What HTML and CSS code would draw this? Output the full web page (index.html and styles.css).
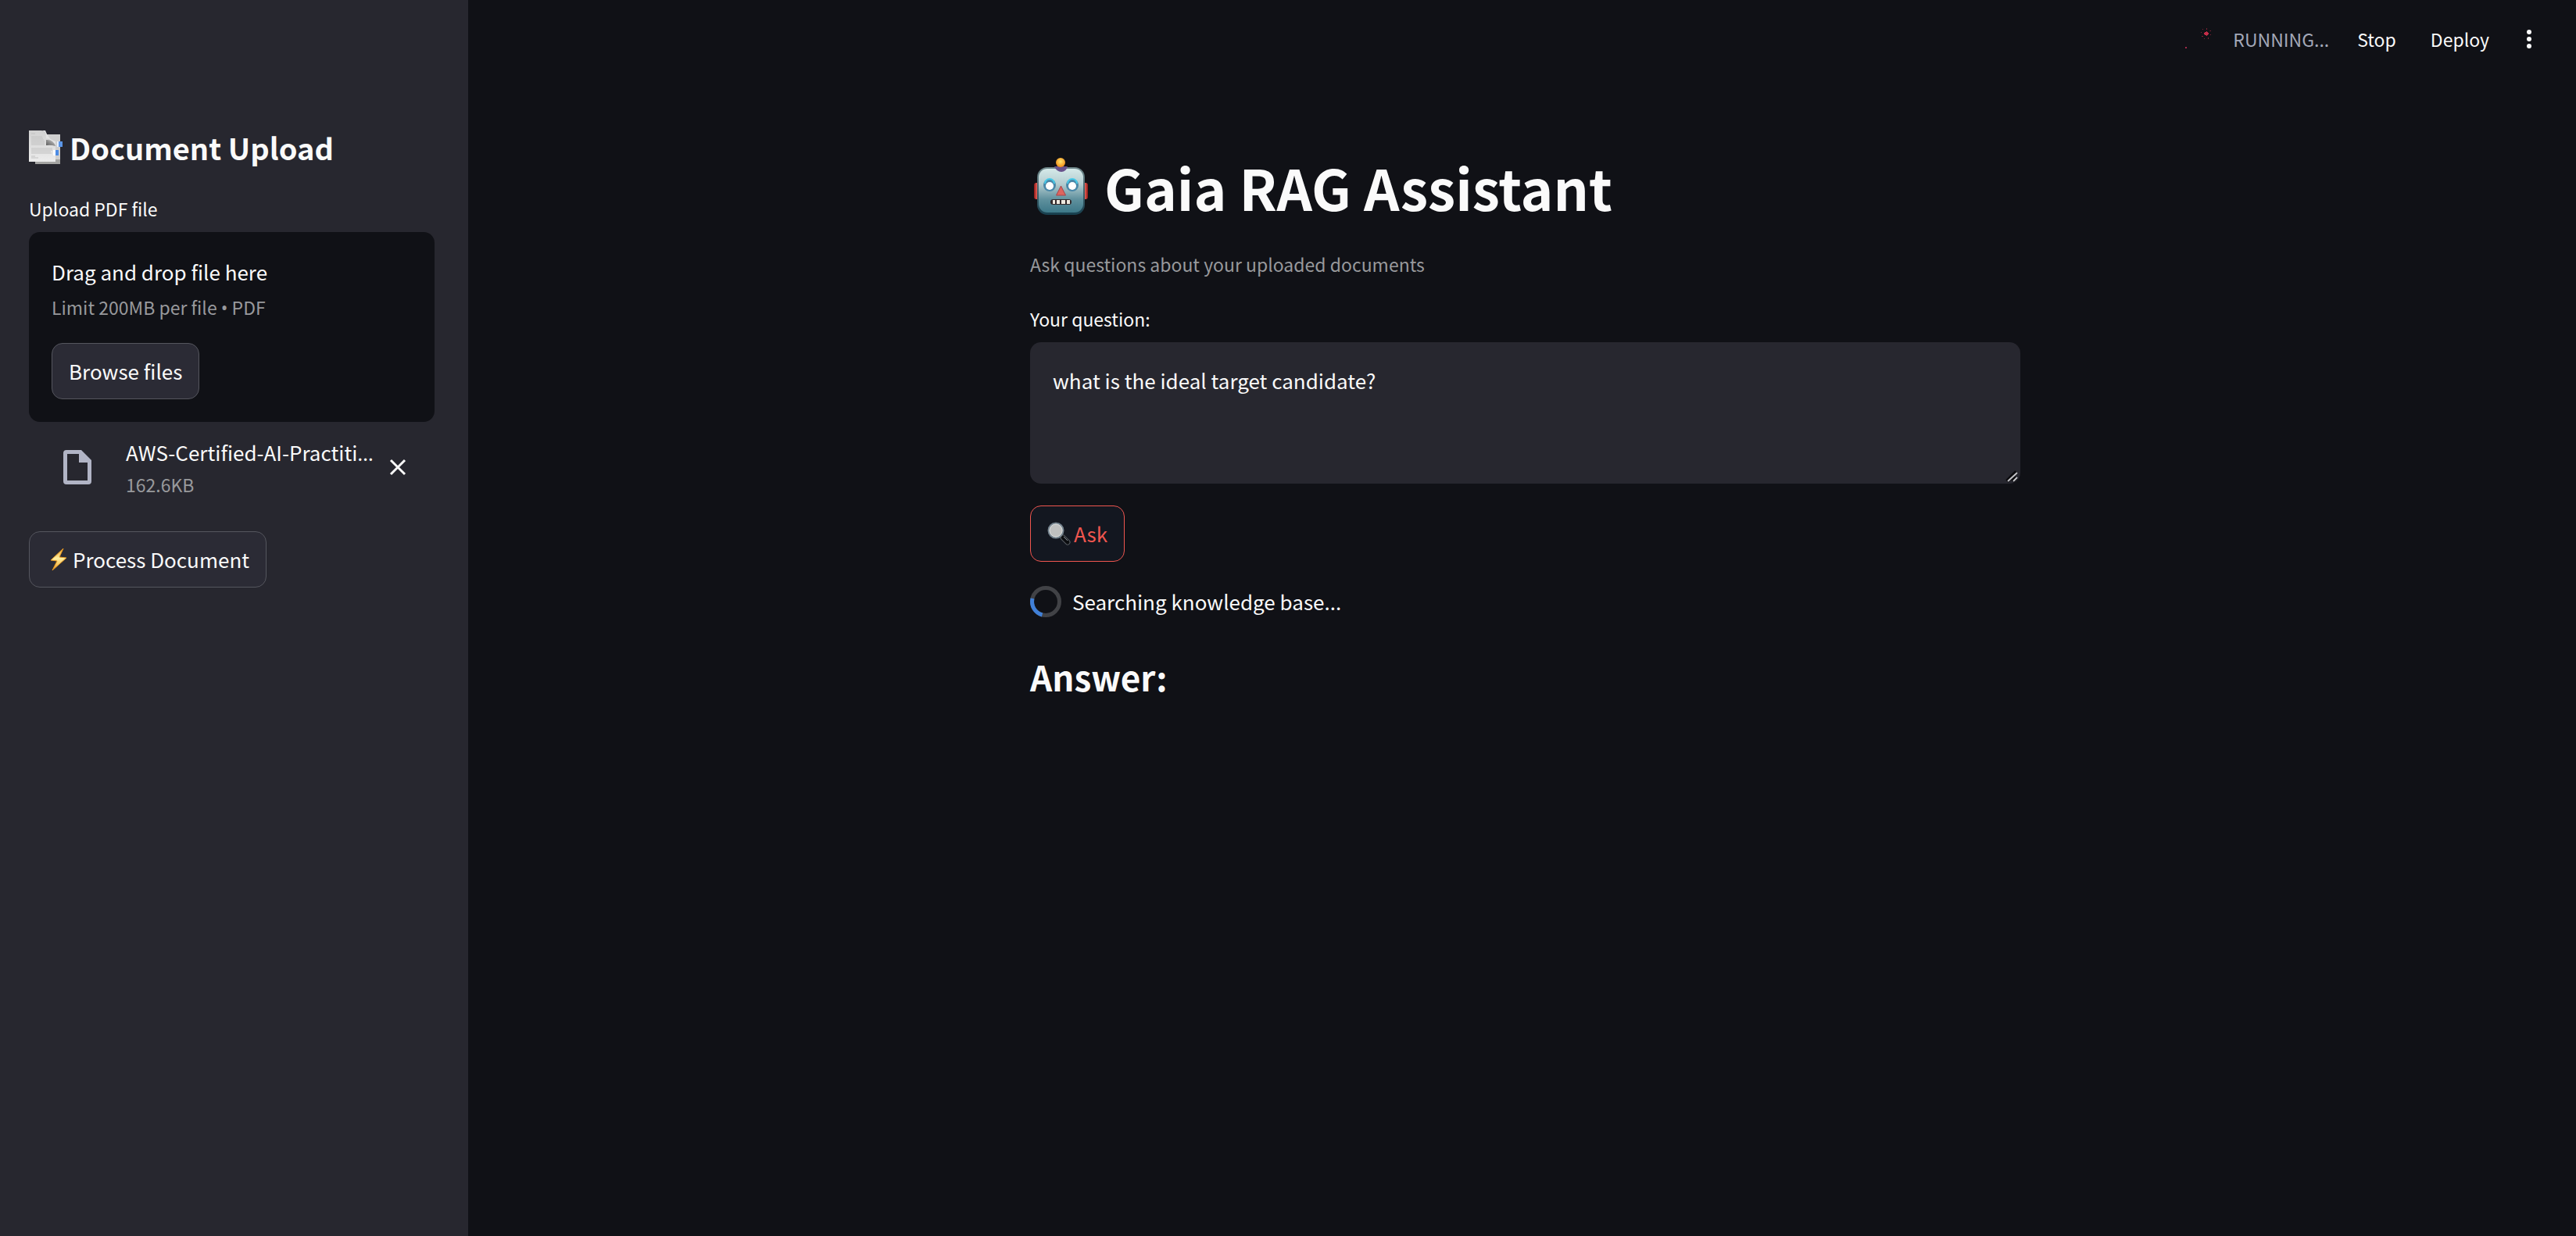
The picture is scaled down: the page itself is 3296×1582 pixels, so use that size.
FILE: index.html
```html
<!DOCTYPE html>
<html lang="en">
<head>
<meta charset="utf-8">
<meta name="viewport" content="width=device-width, initial-scale=1">
<title>Gaia RAG Assistant</title>
<link rel="stylesheet" href="styles.css">
</head>
<body>
<div class="app">
  <aside class="sidebar">
    <h2 class="sidebar-title">
      <svg class="doc-emoji" viewBox="0 0 42 44" aria-hidden="true">
        <defs>
          <linearGradient id="page" x1="0" y1="0" x2="0" y2="1"><stop offset="0" stop-color="#d2d2d2"/><stop offset="1" stop-color="#ececec"/></linearGradient>
          <linearGradient id="curl" x1="0" y1="1" x2="1" y2="0"><stop offset="0" stop-color="#555"/><stop offset=".45" stop-color="#8b8b8b"/><stop offset="1" stop-color="#d4d4d4"/></linearGradient>
        </defs>
        <path d="M8 5h32v38H8z" fill="#a5a5a3"/>
        <path d="M22 5h18v32H22z" fill="#cfcfcf"/>
        <path d="M38 14h5v7h-5z" fill="#5b96e8"/><path d="M36 14h2v7h-2z" fill="#e6effc"/>
        <path d="M0 0h16q6 1 7 10l11 10v20H0z" fill="url(#page)"/>
        <path d="M16 0q6 1 6 10 6 0 12 10V14Q25 12 21 0z" fill="#e3e3e3"/>
        <path d="M22 12q9-1 12 8-6-2-12-1z" fill="url(#curl)"/>
        <path d="M3 4h5M3 8h14M3 10h15M3 12h16M3 14h17M3 16h17M3 18h17M3 23h27M3 25h27M3 27h25M3 29h26M3 33h5M3 35h9" stroke="#c2c2c2" stroke-width="1"/>
        <path d="M34 25h4v7h-4z" fill="#4c8be4"/><path d="M31 25h3v7h-3z" fill="#fff"/>
      </svg>
      <span>Document Upload</span>
    </h2>
    <label class="label" for="browse">Upload PDF file</label>
    <section class="dropzone">
      <p class="body-text">Drag and drop file here</p>
      <p class="note dropzone-limit">Limit 200MB per file <span class="symbol">•</span> PDF</p>
      <button class="button" id="browse" type="button">Browse files</button>
    </section>
    <div class="file">
      <svg class="file-icon" viewBox="0 0 36 44" aria-hidden="true">
        <path d="M4 0h19l13 13v27q0 4-4 4H4q-4 0-4-4V4q0-4 4-4zM5 5v34h26V16H20V5z" fill="#b1b4c5" fill-rule="evenodd"/>
      </svg>
      <div class="file-info">
        <p class="file-name">AWS-Certified-AI-Practiti<span class="symbol">…</span></p>
        <p class="note">162.6KB</p>
      </div>
      <button class="icon-button" type="button" aria-label="Remove file">
        <svg class="close-icon" viewBox="0 0 20 20" aria-hidden="true"><path d="M1 1l18 18M19 1L1 19" stroke="#fafafa" stroke-width="3"/></svg>
      </button>
    </div>
    <button class="button button-process" type="button">
      <svg class="bolt" viewBox="0 0 20 28" aria-hidden="true">
        <defs><linearGradient id="bolt" x1="0" y1="0" x2="0" y2="1"><stop offset="0" stop-color="#e9a02d"/><stop offset=".45" stop-color="#fff0a0"/><stop offset="1" stop-color="#ee9d22"/></linearGradient></defs>
        <path d="M16 0L0 15l8 1-6 12 18-16-9-1z" fill="url(#bolt)" stroke="#e8981f" stroke-width="1"/>
      </svg>
      <span>Process Document</span>
    </button>
  </aside>

  <div class="page">
    <header class="toolbar">
      <div class="status">
        <svg class="sparks" viewBox="0 0 36 36" aria-hidden="true">
          <path d="M25 9h2v-1h1v1h1v1h1v2h-1v1h-1v1h-1v-1h-2v-1h-1v-2h1z" fill="#c52d49"/>
          <path d="M22 5h1v1h-1zM27 4h1v2h-1zM31 7h2v1h-1zM20 9h1v1h-1zM21 14h2v1h-2zM32 12h1v1h-1zM24 17h1v1h-1zM29 16h1v2h-1z" fill="#7c2136"/>
          <path d="M0 28h2v2H0z" fill="#a32a48"/>
        </svg>
        <span class="status-text">RUNNING...</span>
      </div>
      <button class="stop" type="button">Stop</button>
      <button class="deploy" type="button">Deploy</button>
      <button class="icon-button" type="button" aria-label="Main menu">
        <svg class="menu-icon" viewBox="0 0 6 26" aria-hidden="true" fill="#fafafa"><circle cx="3" cy="4" r="3"/><circle cx="3" cy="13" r="3"/><circle cx="3" cy="22" r="3"/></svg>
      </button>
    </header>

    <main class="content">
      <h1 class="title">
        <svg class="robot" viewBox="0 0 70 74" aria-hidden="true">
          <defs>
            <linearGradient id="face" x1="0" y1="0" x2="0" y2="1"><stop offset="0" stop-color="#d5e9e9"/><stop offset=".35" stop-color="#b3cccf"/><stop offset=".7" stop-color="#5f909d"/><stop offset="1" stop-color="#3d7888"/></linearGradient>
            <linearGradient id="edge" x1="0" y1="0" x2="0" y2="1"><stop offset="0" stop-color="#70888b"/><stop offset="1" stop-color="#173f4e"/></linearGradient>
            <radialGradient id="bulb" cx=".5" cy=".4" r=".6"><stop offset="0" stop-color="#ffe76f"/><stop offset="1" stop-color="#f08a16"/></radialGradient>
            <linearGradient id="ear"><stop offset="0" stop-color="#8c1715"/><stop offset=".5" stop-color="#ed6258"/><stop offset="1" stop-color="#8c1715"/></linearGradient>
          </defs>
          <rect x="0" y="32" width="8" height="21" rx="3" fill="url(#ear)"/>
          <rect x="61" y="32" width="8" height="21" rx="3" fill="url(#ear)"/>
          <rect x="4" y="12" width="61" height="61" rx="13" fill="url(#edge)"/>
          <rect x="6" y="14" width="57" height="56" rx="11" fill="url(#face)"/>
          <path d="M26 11h17q-2 7-8 7t-9-7z" fill="#67518b"/>
          <circle cx="34" cy="6" r="6" fill="url(#bulb)"/>
          <circle cx="20" cy="35" r="8" fill="#4a87a8"/><circle cx="49" cy="35" r="8" fill="#4a87a8"/>
          <path d="M14 33a6 6 0 0 1 12 0M43 33a6 6 0 0 1 12 0" fill="none" stroke="#45cbea" stroke-width="2"/>
          <circle cx="20" cy="36" r="5" fill="#fff"/><circle cx="49" cy="36" r="5" fill="#fff"/>
          <path d="M34.500 36l6 12h-12z" fill="#de655e" stroke="#a84249" stroke-width="1"/>
          <rect x="21" y="53" width="27" height="7" rx="3.500" fill="#32292b"/>
          <path d="M24 54h3v5h-3zM29 54h4v5h-4zM35 54h5v5h-5zM42 54h4v5h-4z" fill="#eee9df"/>
        </svg>
        <span>Gaia RAG Assistant</span>
      </h1>
      <p class="note caption">Ask questions about your uploaded documents</p>
      <label class="label" for="question">Your question:</label>
      <div class="question-box">
        <textarea class="question" id="question" spellcheck="false">what is the ideal target candidate?</textarea>
        <svg class="grip" viewBox="0 0 16 16" aria-hidden="true">
          <path d="M1 14L13 2M8 14L13 9" stroke="#0b0b0e" stroke-width="5"/>
          <path d="M2 14L14 3M9 14L14 9" stroke="#c4c4c8" stroke-width="2"/>
        </svg>
      </div>
      <button class="button button-ask" type="button">
        <svg class="magnifier" viewBox="0 0 30 30" aria-hidden="true">
          <path d="M17 18l3 3" stroke="#8c8f92" stroke-width="3"/>
          <path d="M20 20l6 6" stroke="#565b60" stroke-width="7" stroke-linecap="round"/>
          <path d="M20 20l6 6" stroke="#0b0d10" stroke-width="5" stroke-linecap="round"/>
          <path d="M21 19l5 5" stroke="#8a9299" stroke-width="1"/>
          <circle cx="11" cy="11" r="9.500" fill="#bfc0bf" stroke="#74838e" stroke-width="2"/>
          <circle cx="11" cy="11" r="8" fill="none" stroke="#dadcdc" stroke-width="1"/>
        </svg>
        <span>Ask</span>
      </button>
      <div class="spinner-row" role="status">
        <svg class="spinner" viewBox="0 0 40 40" aria-hidden="true" fill="none" stroke-width="5">
          <circle cx="20" cy="20" r="17.500" stroke="#414246"/>
          <path d="M3 16A17.500 17.500 0 0 0 15.500 37" stroke="#4080d8"/>
        </svg>
        <span>Searching knowledge base...</span>
      </div>
      <h2 class="answer">Answer:</h2>
    </main>
  </div>
</div>
</body>
</html>
```

FILE: styles.css
```css
* {
  box-sizing: border-box;
}

body {
  margin: 0;
  background: #101116;
  color: #fafafa;
  font-family: "Noto Sans CJK SC", "Noto Sans", sans-serif;
  font-size: 26px;
  line-height: 44px;
}

h1,
h2,
p {
  margin: 0;
}

svg {
  display: block;
  flex: none;
  overflow: visible;
}

button,
textarea {
  font: inherit;
  color: inherit;
}

button {
  padding: 0;
  border: 0;
  background: none;
  cursor: pointer;
}

.app {
  display: flex;
  min-height: 100vh;
}

.sidebar {
  flex: none;
  width: 599px;
  padding: 165px 43px 36px 37px;
  background: #27272f;
}

.sidebar-title {
  display: flex;
  align-items: center;
  gap: 10px;
  margin-bottom: 36px;
  font-size: 38px;
  line-height: 48px;
}

.doc-emoji {
  width: 42px;
  height: 44px;
}

.label {
  display: block;
  margin-bottom: 12px;
  font-size: 23px;
  line-height: 36px;
}

.note {
  color: #98999c;
  font-size: 23px;
  line-height: 38px;
}

/* Punctuation that the CJK face would set full-width */
.symbol {
  font-family: "Noto Sans", sans-serif;
  line-height: 1;
}

.dropzone {
  padding: 29px;
  border-radius: 14px;
  background: #101116;
}

.dropzone-limit {
  margin: 4px 0 27px;
}

.button {
  display: flex;
  align-items: center;
  height: 72px;
  padding: 0 21px;
  border: 1px solid #55565e;
  border-radius: 14px;
  background: #2b2b35;
}

.file {
  display: flex;
  align-items: center;
  margin: 17px 0 41px;
  padding: 0 37px 0 44px;
}

.file-icon {
  width: 36px;
  height: 44px;
}

.file-info {
  flex: 1;
  min-width: 0;
  margin: 0 0 0 44px;
}

.file-name {
  white-space: nowrap;
}

.close-icon {
  width: 20px;
  height: 20px;
}

.button-process {
  gap: 8px;
  padding-left: 27px;
}

.bolt {
  width: 20px;
  height: 28px;
}

.page {
  flex: 1;
  min-width: 0;
  padding-left: 8px;
}

.toolbar {
  display: flex;
  align-items: center;
  justify-content: flex-end;
  height: 100px;
  padding-right: 57px;
  font-size: 23px;
}

.status {
  display: flex;
  align-items: center;
  gap: 25px;
  color: #a3a8b8;
}

.sparks {
  width: 36px;
  height: 36px;
}

.stop {
  margin-left: 36px;
}

.deploy {
  margin: 0 48px 0 44px;
}

.menu-icon {
  width: 6px;
  height: 26px;
}

.content {
  max-width: 1267px;
  margin: 0 auto;
  padding: 96px 0 60px;
}

.title {
  display: flex;
  align-items: center;
  gap: 20px;
  margin-bottom: 37px;
  padding-left: 5px;
  font-size: 71px;
  line-height: 86px;
}

.robot {
  width: 70px;
  height: 74px;
}

.caption {
  margin-bottom: 33px;
}

.question-box {
  position: relative;
  margin-bottom: 28px;
}

.question {
  display: block;
  width: 100%;
  height: 181px;
  padding: 27px 29px;
  border: 0;
  border-radius: 14px;
  outline: 0;
  background: #27272f;
  resize: none;
}

.grip {
  position: absolute;
  right: 2px;
  bottom: 1px;
  width: 16px;
  height: 16px;
}

.button-ask {
  gap: 4px;
  border-color: #f0564f;
  background: #131720;
  color: #f0564f;
}

.magnifier {
  width: 30px;
  height: 30px;
}

.spinner-row {
  display: flex;
  align-items: center;
  gap: 14px;
  margin: 29px 0 46px;
}

.spinner {
  width: 40px;
  height: 40px;
}

.answer {
  font-size: 44px;
  line-height: 56px;
}
```
